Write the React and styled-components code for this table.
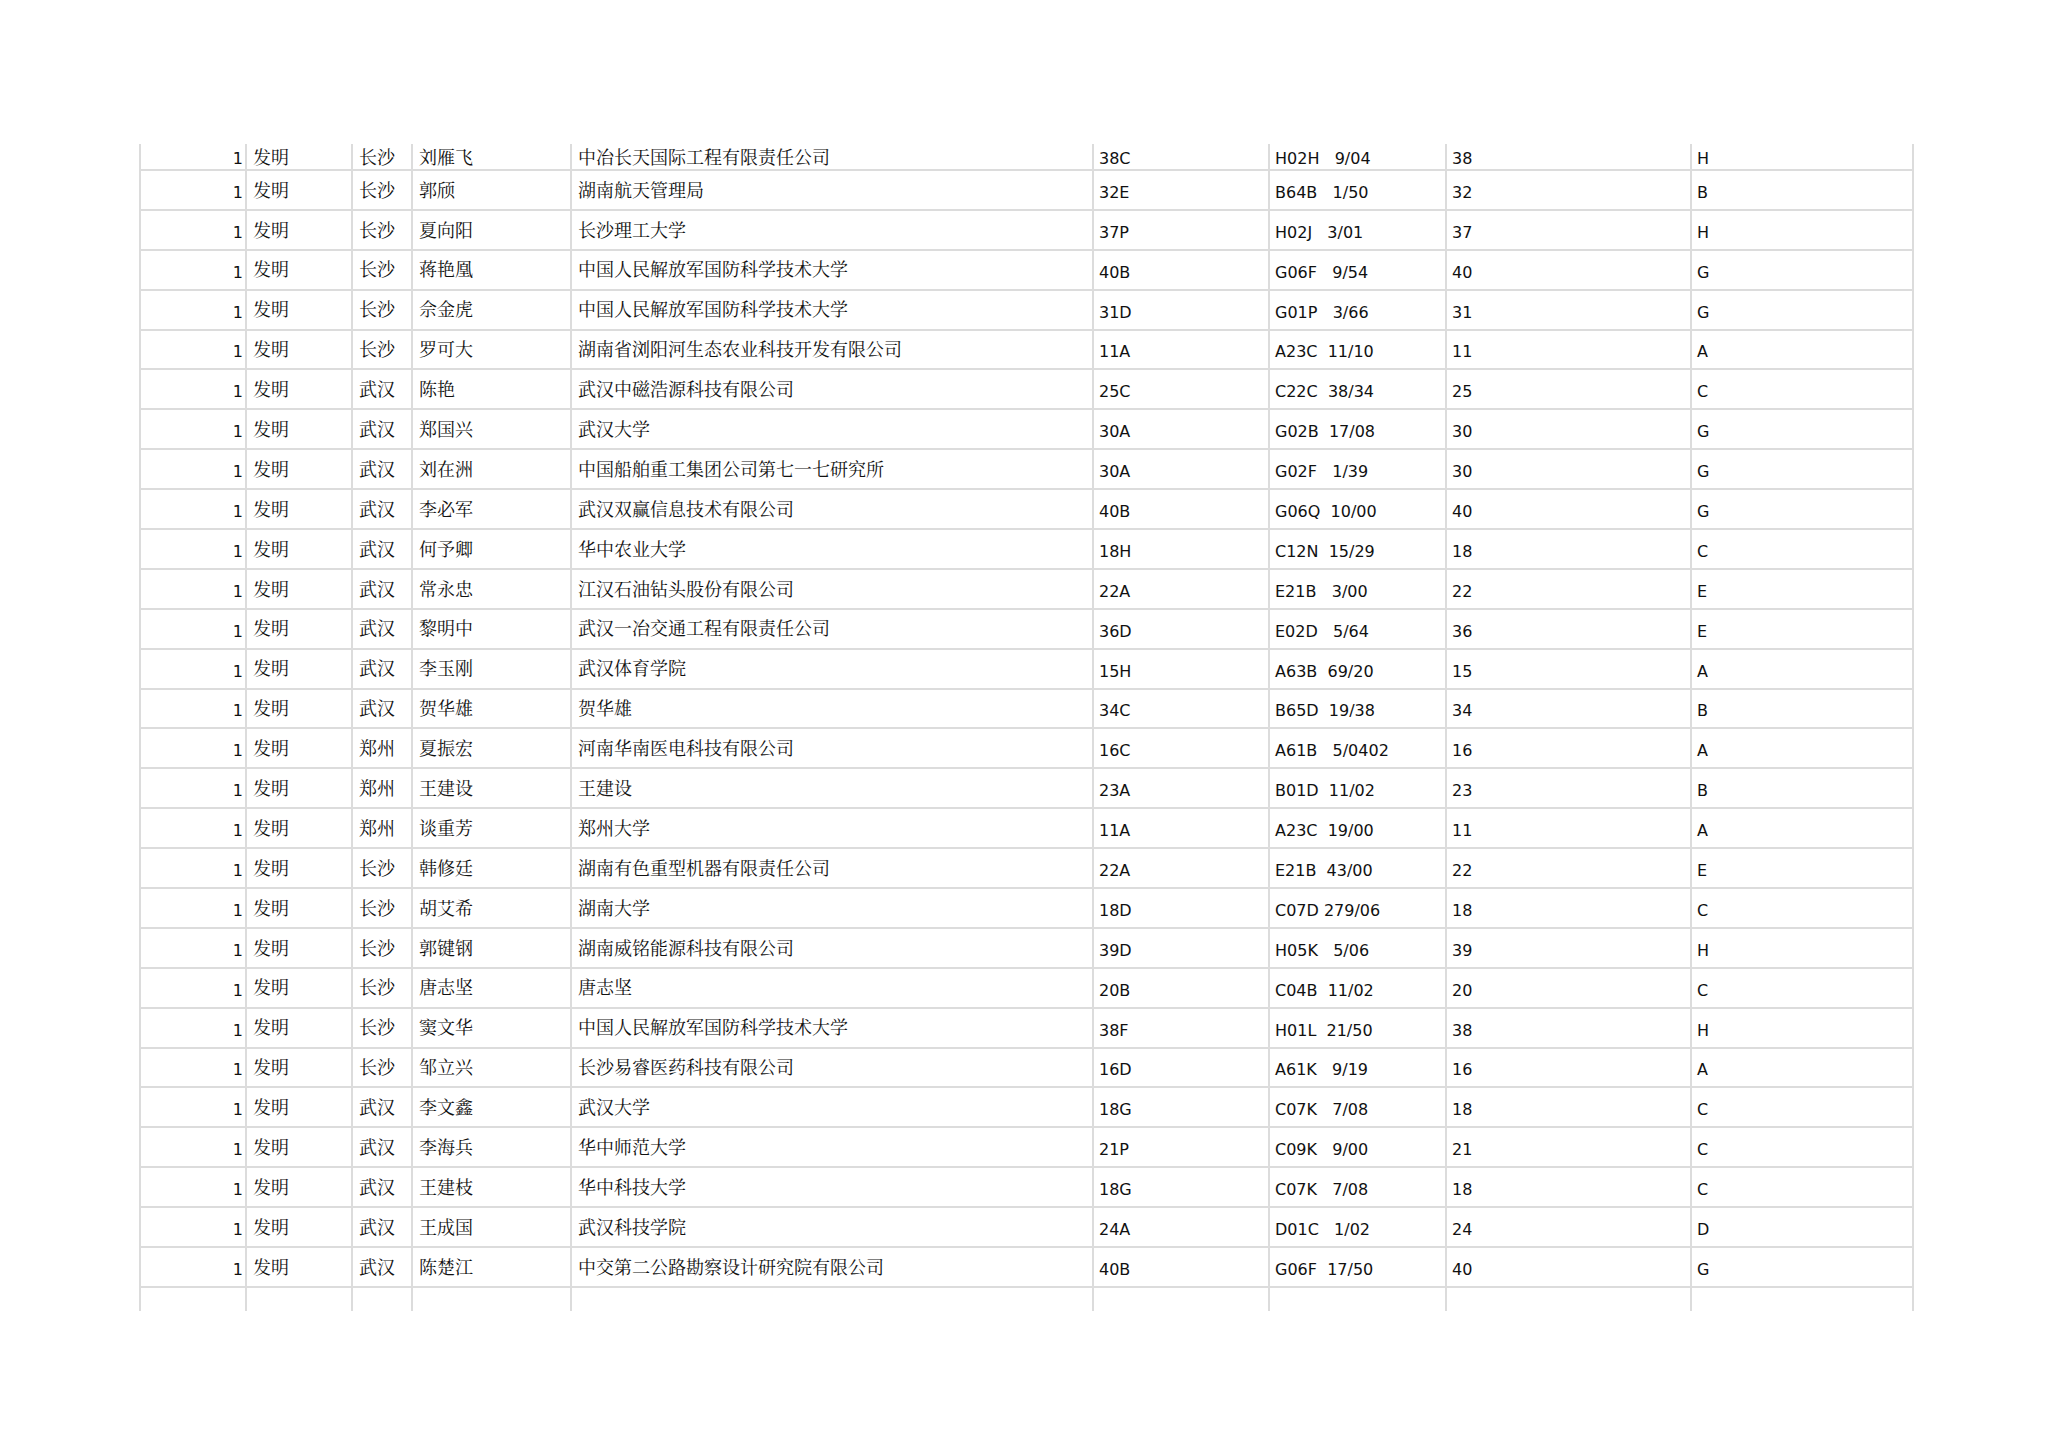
import React from "react";
import styled, { createGlobalStyle } from "styled-components";

const Global = createGlobalStyle`
  html, body { margin: 0; padding: 0; background: #ffffff; }
  #root { min-height: 1447px; }
`;

const Page = styled.div`
  box-sizing: border-box;
  width: 2048px;
  min-height: 1447px;
  padding: 144px 0 0 139px;
  background: #ffffff;
`;

const Sheet = styled.div`
  display: flex;
  flex-direction: column;
  width: max-content;
`;

const COLS = "106px 106px 60px 159px 522px 176px 177px 245px 222px";

const Row = styled.div`
  display: grid;
  grid-template-columns: ${COLS};
  height: ${(p) => p.$h}px;
  box-sizing: border-box;
  border-left: 2px solid #dcdcdc;
`;

const Cell = styled.div`
  box-sizing: border-box;
  display: flex;
  align-items: center;
  overflow: hidden;
  white-space: pre;
  color: #111;
  border-right: 2px solid #dcdcdc;
  border-bottom: ${(p) => (p.$open ? "none" : "2px solid #dcdcdc")};
  justify-content: ${(p) => (p.$kind === "num" ? "flex-end" : "flex-start")};
  padding: ${(p) =>
    p.$kind === "cjk"
      ? `0 0 ${p.$first ? 0 : 1}px 6px`
      : p.$kind === "num"
      ? `${p.$first ? 4 : 5}px 2px 0 0`
      : `${p.$first ? 4 : 5}px 0 0 5px`};
  font-family: ${(p) =>
    p.$kind === "cjk"
      ? `"Noto Serif CJK SC", "Source Han Serif SC", "AR PL UMing CN", "Noto Sans CJK SC", serif`
      : `"DejaVu Sans", Verdana, sans-serif`};
  font-size: ${(p) => (p.$kind === "cjk" ? 18 : 16)}px;
  line-height: 1.2;
`;

const raw = [
  ["长沙", "刘雁飞", "中冶长天国际工程有限责任公司", "38C", "H02H", "9", "04", "38", "H"],
  ["长沙", "郭颀", "湖南航天管理局", "32E", "B64B", "1", "50", "32", "B"],
  ["长沙", "夏向阳", "长沙理工大学", "37P", "H02J", "3", "01", "37", "H"],
  ["长沙", "蒋艳凰", "中国人民解放军国防科学技术大学", "40B", "G06F", "9", "54", "40", "G"],
  ["长沙", "佘金虎", "中国人民解放军国防科学技术大学", "31D", "G01P", "3", "66", "31", "G"],
  ["长沙", "罗可大", "湖南省浏阳河生态农业科技开发有限公司", "11A", "A23C", "11", "10", "11", "A"],
  ["武汉", "陈艳", "武汉中磁浩源科技有限公司", "25C", "C22C", "38", "34", "25", "C"],
  ["武汉", "郑国兴", "武汉大学", "30A", "G02B", "17", "08", "30", "G"],
  ["武汉", "刘在洲", "中国船舶重工集团公司第七一七研究所", "30A", "G02F", "1", "39", "30", "G"],
  ["武汉", "李必军", "武汉双赢信息技术有限公司", "40B", "G06Q", "10", "00", "40", "G"],
  ["武汉", "何予卿", "华中农业大学", "18H", "C12N", "15", "29", "18", "C"],
  ["武汉", "常永忠", "江汉石油钻头股份有限公司", "22A", "E21B", "3", "00", "22", "E"],
  ["武汉", "黎明中", "武汉一冶交通工程有限责任公司", "36D", "E02D", "5", "64", "36", "E"],
  ["武汉", "李玉刚", "武汉体育学院", "15H", "A63B", "69", "20", "15", "A"],
  ["武汉", "贺华雄", "贺华雄", "34C", "B65D", "19", "38", "34", "B"],
  ["郑州", "夏振宏", "河南华南医电科技有限公司", "16C", "A61B", "5", "0402", "16", "A"],
  ["郑州", "王建设", "王建设", "23A", "B01D", "11", "02", "23", "B"],
  ["郑州", "谈重芳", "郑州大学", "11A", "A23C", "19", "00", "11", "A"],
  ["长沙", "韩修廷", "湖南有色重型机器有限责任公司", "22A", "E21B", "43", "00", "22", "E"],
  ["长沙", "胡艾希", "湖南大学", "18D", "C07D", "279", "06", "18", "C"],
  ["长沙", "郭键钢", "湖南威铭能源科技有限公司", "39D", "H05K", "5", "06", "39", "H"],
  ["长沙", "唐志坚", "唐志坚", "20B", "C04B", "11", "02", "20", "C"],
  ["长沙", "窦文华", "中国人民解放军国防科学技术大学", "38F", "H01L", "21", "50", "38", "H"],
  ["长沙", "邹立兴", "长沙易睿医药科技有限公司", "16D", "A61K", "9", "19", "16", "A"],
  ["武汉", "李文鑫", "武汉大学", "18G", "C07K", "7", "08", "18", "C"],
  ["武汉", "李海兵", "华中师范大学", "21P", "C09K", "9", "00", "21", "C"],
  ["武汉", "王建枝", "华中科技大学", "18G", "C07K", "7", "08", "18", "C"],
  ["武汉", "王成国", "武汉科技学院", "24A", "D01C", "1", "02", "24", "D"],
  ["武汉", "陈楚江", "中交第二公路勘察设计研究院有限公司", "40B", "G06F", "17", "50", "40", "G"],
];

const ipc = (code, main, sub) => `${code} ${main.padStart(3, " ")}/${sub}`;

function DataRow({ r, first }) {
  const [city, person, org, cls, code, main, sub, num, sec] = r;
  return (
    <Row $h={first ? 27 : 39.9}>
      <Cell $kind="num" $first={first}>1</Cell>
      <Cell $kind="cjk" $first={first}>发明</Cell>
      <Cell $kind="cjk" $first={first}>{city}</Cell>
      <Cell $kind="cjk" $first={first}>{person}</Cell>
      <Cell $kind="cjk" $first={first}>{org}</Cell>
      <Cell $kind="latin" $first={first}>{cls}</Cell>
      <Cell $kind="latin" $first={first}>{ipc(code, main, sub)}</Cell>
      <Cell $kind="latin" $first={first}>{num}</Cell>
      <Cell $kind="latin" $first={first}>{sec}</Cell>
    </Row>
  );
}

export default function App() {
  return (
    <>
      <Global />
      <Page>
        <Sheet>
          {raw.map((r, i) => (
            <DataRow key={i} r={r} first={i === 0} />
          ))}
          <Row $h={23}>
            {Array.from({ length: 9 }).map((_, i) => (
              <Cell key={i} $kind="latin" $open />
            ))}
          </Row>
        </Sheet>
      </Page>
    </>
  );
}
